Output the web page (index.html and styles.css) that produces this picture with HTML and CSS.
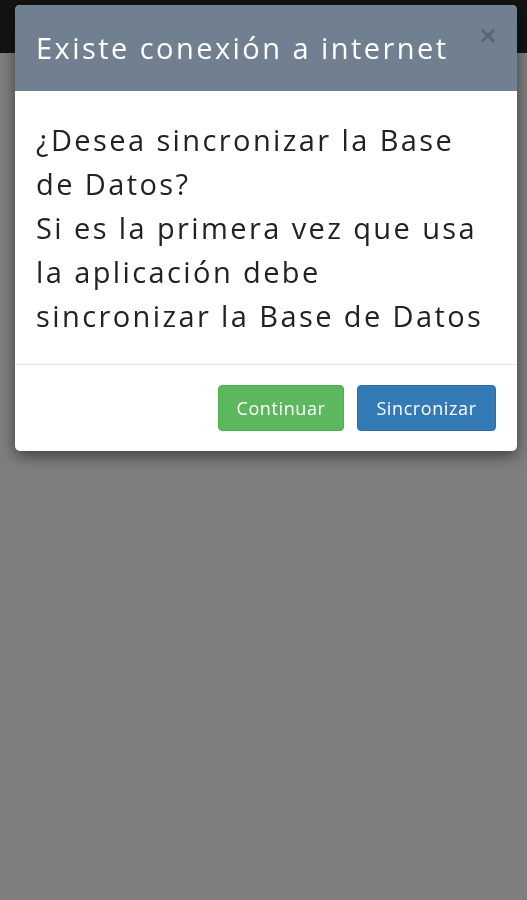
FILE: index.html
```html
<!DOCTYPE html>
<html lang="es">
<head>
<meta charset="utf-8">
<title>Sincronizar</title>
<link rel="stylesheet" href="styles.css">
</head>
<body>
<div class="page">
  <div class="navbar"></div>
  <div class="backdrop"></div>
</div>
<div class="overlay">
  <div class="modal">
    <div class="modal-header">
      <h4 class="modal-title">Existe conexión a internet</h4>
      <button class="close" type="button">×</button>
    </div>
    <div class="modal-body">
      <p>¿Desea sincronizar la Base de Datos?<br>Si es la primera vez que usa la aplicación debe sincronizar la Base de Datos</p>
    </div>
    <div class="modal-footer">
      <button class="btn btn-success" type="button">Continuar</button>
      <button class="btn btn-primary" type="button">Sincronizar</button>
    </div>
  </div>
</div>
</body>
</html>
```
FILE: styles.css
```css
html, body {
  margin: 0;
  padding: 0;
  height: 100%;
}
body {
  font-family: "Open Sans", "Liberation Sans", sans-serif;
  background: #7f7f7f;
}
.page {
  display: flex;
  flex-direction: column;
  height: 100%;
}
.navbar {
  height: 53px;
  background: #131313;
  flex: none;
}
.backdrop {
  flex: 1;
  background: #7f7f7f;
}
.overlay {
  position: fixed;
  top: 0;
  left: 0;
  right: 0;
  bottom: 0;
  padding: 4.5px 10px 0 15px;
}
.modal {
  width: 502px;
  background: #fff;
  border-radius: 5px;
  box-shadow: 0 5px 15px rgba(0, 0, 0, 0.5);
  overflow: hidden;
}
.modal-header {
  background: #708090;
  display: flex;
  justify-content: space-between;
  align-items: flex-start;
  padding: 27px 21px 27.5px 21px;
  height: 32px;
}
.modal-title {
  margin: 0;
  font-weight: 400;
  font-size: 29px;
  line-height: 32px;
  letter-spacing: 2.45px;
  color: #fff;
  white-space: nowrap;
}
.close {
  border: 0;
  background: none;
  padding: 0;
  margin-top: -10px;
  font-family: "Liberation Sans", sans-serif;
  font-size: 28px;
  font-weight: 700;
  line-height: 1;
  color: #000;
  opacity: 0.2;
}
.modal-body {
  padding: 27px 20px 26px 21px;
}
.modal-body p {
  margin: 0;
  font-size: 29px;
  line-height: 44px;
  letter-spacing: 2.4px;
  color: #222;
}
.modal-footer {
  border-top: 1px solid #e5e5e5;
  padding: 20px 21px 20px 21px;
  display: flex;
  justify-content: flex-end;
  gap: 13px;
}
.btn {
  height: 46px;
  border: 1px solid transparent;
  border-radius: 4px;
  font-family: "Open Sans", "Liberation Sans", sans-serif;
  font-size: 18px;
  letter-spacing: 0.6px;
  color: #fff;
  padding: 0;
}
.btn-success {
  width: 126px;
  background: #5cb85c;
  border-color: #4cae4c;
}
.btn-primary {
  width: 139px;
  background: #337ab7;
  border-color: #2e6da4;
}
```
